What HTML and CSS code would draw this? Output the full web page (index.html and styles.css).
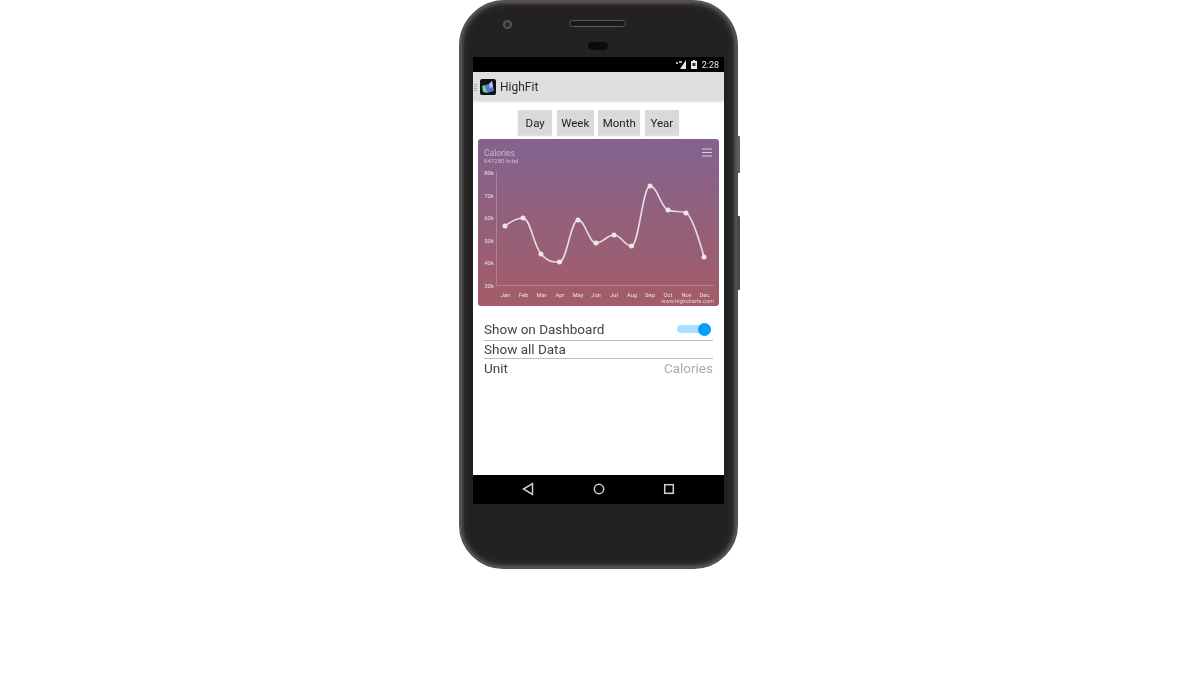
FILE: index.html
```html
<!DOCTYPE html>
<html lang="en">
<head>
<meta charset="utf-8">
<title>HighFit</title>
<link rel="stylesheet" href="styles.css">
</head>
<body>
<div class="phone">
  <span class="side-btn power"></span>
  <span class="side-btn volume"></span>
  <div class="bezel-top">
    <span class="camera"></span>
    <span class="speaker"></span>
    <span class="sensor"></span>
  </div>
  <div class="screen">
    <div class="statusbar">
      <svg class="status-signal" width="10" height="9" viewBox="0 0 10 9"><path class="ic-dim" d="M0 2h2v2H0zM3 1h3v2H3z"/><path class="ic-white" d="M10 0v9H4z"/></svg>
      <svg class="status-battery" width="6" height="9" viewBox="0 0 6 9"><path class="ic-white" d="M2 0h2v1h2v8H0V1h2z"/><path class="ic-black" d="M1.500 3h3v3h-3z"/></svg>
      <span class="clock">2:28</span>
    </div>
    <header class="appbar">
      <span class="grip"></span>
      <svg class="logo" width="16" height="16" viewBox="0 0 16 16">
        <rect class="logo-bg" width="16" height="16" rx="2"/>
        <path class="logo-green" d="M2 7l3-1 3 8-5-1z"/>
        <path class="logo-blue" d="M5 6l4-1 3-3 2 10-4 1-2 1z"/>
        <path class="logo-light" d="M9 5l3-3 1 6-3 1z"/>
      </svg>
      <span class="app-title">HighFit</span>
    </header>
    <main class="content">
      <div class="ranges">
        <button class="range">Day</button>
        <button class="range">Week</button>
        <button class="range">Month</button>
        <button class="range">Year</button>
      </div>
      <div class="chart">
        <svg width="241" height="167" viewBox="0 0 241 167">
          <defs>
            <linearGradient id="chartBg" x1="0" y1="0" x2="0" y2="1">
              <stop offset="0" stop-color="#83638f"/>
              <stop offset="1" stop-color="#a45c67"/>
            </linearGradient>
          </defs>
          <rect width="241" height="167" rx="3" fill="url(#chartBg)"/>
          <text class="c-title" x="6" y="17">Calories</text>
          <text class="c-sub" x="6" y="23.500">647280 total</text>
          <path class="c-menu" d="M224 10h10M224 13.500h10M224 17h10"/>
          <path class="c-axis" d="M18.500 33V146.500H236"/>
          <g class="c-ylabels">
            <text x="16" y="36">80k</text>
            <text x="16" y="58.500">70k</text>
            <text x="16" y="81">60k</text>
            <text x="16" y="103.500">50k</text>
            <text x="16" y="126">40k</text>
            <text x="16" y="148.500">30k</text>
          </g>
          <path class="c-line" d="M27 87C27 87 37.700 79 45 79C52.300 79 55.700 107 63 115C70.300 123 74.200 123 81.500 123C88.800 123 92.700 81 100 81C107.300 81 110.700 104 118 104C125.300 104 128.700 96 136 96C143.300 96 146.200 107 153.500 107C160.800 107 164.700 47 172 47C179.300 47 182.700 68 190 71C197.300 74 200.700 71 208 74C215.300 77 226 118 226 118"/>
          <g class="c-dots">
            <circle cx="27" cy="87" r="2.500"/><circle cx="45" cy="79" r="2.500"/><circle cx="63" cy="115" r="2.500"/>
            <circle cx="81.500" cy="123" r="2.500"/><circle cx="100" cy="81" r="2.500"/><circle cx="118" cy="104" r="2.500"/>
            <circle cx="136" cy="96" r="2.500"/><circle cx="153.500" cy="107" r="2.500"/><circle cx="172" cy="47" r="2.500"/>
            <circle cx="190" cy="71" r="2.500"/><circle cx="208" cy="74" r="2.500"/><circle cx="226" cy="118" r="2.500"/>
          </g>
          <g class="c-xlabels">
            <text x="27.500" y="157.500">Jan</text><text x="45.500" y="157.500">Feb</text><text x="63.500" y="157.500">Mar</text>
            <text x="82" y="157.500">Apr</text><text x="100" y="157.500">May</text><text x="118" y="157.500">Jun</text>
            <text x="136" y="157.500">Jul</text><text x="154" y="157.500">Aug</text><text x="172" y="157.500">Sep</text>
            <text x="190" y="157.500">Oct</text><text x="208.500" y="157.500">Nov</text><text x="226.500" y="157.500">Dec</text>
          </g>
          <text class="c-credit" x="236" y="164">www.highcharts.com</text>
        </svg>
      </div>
      <div class="settings">
        <div class="row row-first">
          <span>Show on Dashboard</span>
          <span class="toggle"><span class="knob"></span></span>
        </div>
        <div class="row row-second"><span>Show all Data</span></div>
        <div class="row row-last"><span>Unit</span><span class="value">Calories</span></div>
      </div>
    </main>
    <nav class="navbar">
      <svg width="12" height="14" viewBox="0 0 12 14"><path class="nav-ic" d="M10.500 1.500v11L1.500 7z"/></svg>
      <svg width="12" height="12" viewBox="0 0 12 12"><circle class="nav-ic" cx="6" cy="6" r="4.700"/></svg>
      <svg width="12" height="12" viewBox="0 0 12 12"><rect class="nav-ic" x="1.700" y="1.700" width="8.600" height="8.600"/></svg>
    </nav>
  </div>
</div>
</body>
</html>
```
FILE: styles.css
```css
* { box-sizing: border-box; }
html, body { margin: 0; padding: 0; }
body {
  width: 1200px;
  height: 700px;
  background: #fff;
  font-family: Roboto, "Liberation Sans", sans-serif;
  overflow: hidden;
}
.phone {
  position: relative;
  width: 279px;
  height: 569px;
  margin-left: 459px;
  padding: 0 11px;
  border: 3px solid #55524e;
  border-radius: 46px 46px 44px 44px;
  background: #232122;
  box-shadow: inset 0 0 0 2px #3d3a38, inset 0 0 5px 4px #2f2d2c;
  filter: blur(0.55px);
}
.side-btn {
  position: absolute;
  left: 275px;
  width: 3px;
  background: #5f5d5a;
  border-radius: 0 1px 1px 0;
}
.power { top: 133px; height: 37px; }
.volume { top: 213px; height: 74px; background: #4a4846; }
.bezel-top {
  position: relative;
  height: 54px;
}
.camera {
  position: absolute;
  left: 30px;
  top: 17px;
  width: 9px;
  height: 9px;
  border-radius: 50%;
  background: #2b2b2d;
  border: 2px solid #565553;
}
.speaker {
  position: absolute;
  left: 96px;
  top: 17px;
  width: 57px;
  height: 7px;
  border-radius: 4px;
  background: #1c1b1c;
  border: 1.5px solid #5a5957;
}
.sensor {
  position: absolute;
  left: 115px;
  top: 39px;
  width: 20px;
  height: 8px;
  border-radius: 4px;
  background: #0c0b0c;
}
.screen {
  width: 251px;
  height: 447px;
  background: #fff;
  display: flex;
  flex-direction: column;
}
.statusbar {
  height: 15px;
  flex: none;
  background: #000;
  color: #e6e6e6;
  display: flex;
  align-items: center;
  justify-content: flex-end;
  padding-right: 5px;
  gap: 5px;
}
.ic-white { fill: #e8e8e8; }
.ic-dim { fill: #b0b0b0; }
.ic-black { fill: #333; }
.clock { font-size: 9px; }
.appbar {
  position: relative;
  height: 28px;
  flex: none;
  background: #dedede;
  display: flex;
  align-items: center;
  padding: 2px 0 0 7px;
  box-shadow: 0 1px 3px rgba(0,0,0,.22);
}
.grip {
  position: absolute;
  left: 1px;
  top: 12px;
  width: 3px;
  height: 7px;
  background: repeating-linear-gradient(#aaa 0 1px, transparent 1px 2px);
}
.logo { flex: none; }
.logo-bg { fill: #111; }
.logo-green { fill: #58d6a0; }
.logo-blue { fill: #5f74d8; }
.logo-light { fill: #a9c4ea; }
.app-title {
  margin-left: 4px;
  font-size: 12px;
  color: #2a2a2a;
}
.content {
  flex: 1;
  display: flex;
  flex-direction: column;
  padding: 10px 5px 0;
}
.ranges {
  display: flex;
  justify-content: center;
  gap: 4.5px;
}
.range {
  height: 25px;
  padding: 0 4.500px;
  min-width: 34px;
  border: 0;
  background: #d9d9d9;
  color: #222;
  font: 11.500px Roboto, "Liberation Sans", sans-serif;
  box-shadow: 0 1px 1px rgba(0,0,0,.12);
}
.chart {
  height: 167px;
  margin-top: 4px;
}
.chart svg { display: block; }
.c-title { font-size: 8.500px; fill: #c9b8cf; }
.c-sub { font-size: 6.100px; fill: #cdbcd2; }
.c-menu { stroke: #d8cadc; stroke-width: 1.200px; fill: none; }
.c-axis { stroke: #c49aa8; stroke-opacity: .75; stroke-width: .8px; fill: none; }
.c-ylabels text { font-size: 6px; fill: #e6dce6; text-anchor: end; }
.c-xlabels text { font-size: 5.800px; fill: #ecdfe4; text-anchor: middle; }
.c-line { stroke: #e6dce2; stroke-width: 1.600px; fill: none; }
.c-dots circle { fill: #efe6ea; }
.c-credit { font-size: 5.600px; fill: #e2d2d8; text-anchor: end; }
.settings {
  padding: 0 6px;
  margin-top: 14px;
  color: #444;
  font-size: 13.500px;
  width: 241px;
}
.row {
  display: flex;
  justify-content: space-between;
  align-items: center;
  width: 229px;
}
.row-first {
  height: 21px;
  padding-bottom: 2px;
  border-bottom: 1px solid #bdbdbd;
}
.row-second {
  height: 18px;
  padding-bottom: 2px;
  border-bottom: 1px solid #bdbdbd;
}
.row-last { height: 20px; padding-bottom: 2px; }
.value { color: #ababab; }
.toggle {
  position: relative;
  width: 34px;
  height: 8px;
  margin-right: 2px;
  border-radius: 4px;
  background: #aadfff;
}
.knob {
  position: absolute;
  right: 0;
  top: -2.500px;
  width: 13px;
  height: 13px;
  border-radius: 50%;
  background: #0a9cfb;
}
.navbar {
  height: 29px;
  flex: none;
  background: #000;
  display: flex;
  align-items: center;
  justify-content: space-between;
  padding: 0 49px 2px;
}
.nav-ic { fill: none; stroke: #d0d0d0; stroke-width: 1.500px; }
```
